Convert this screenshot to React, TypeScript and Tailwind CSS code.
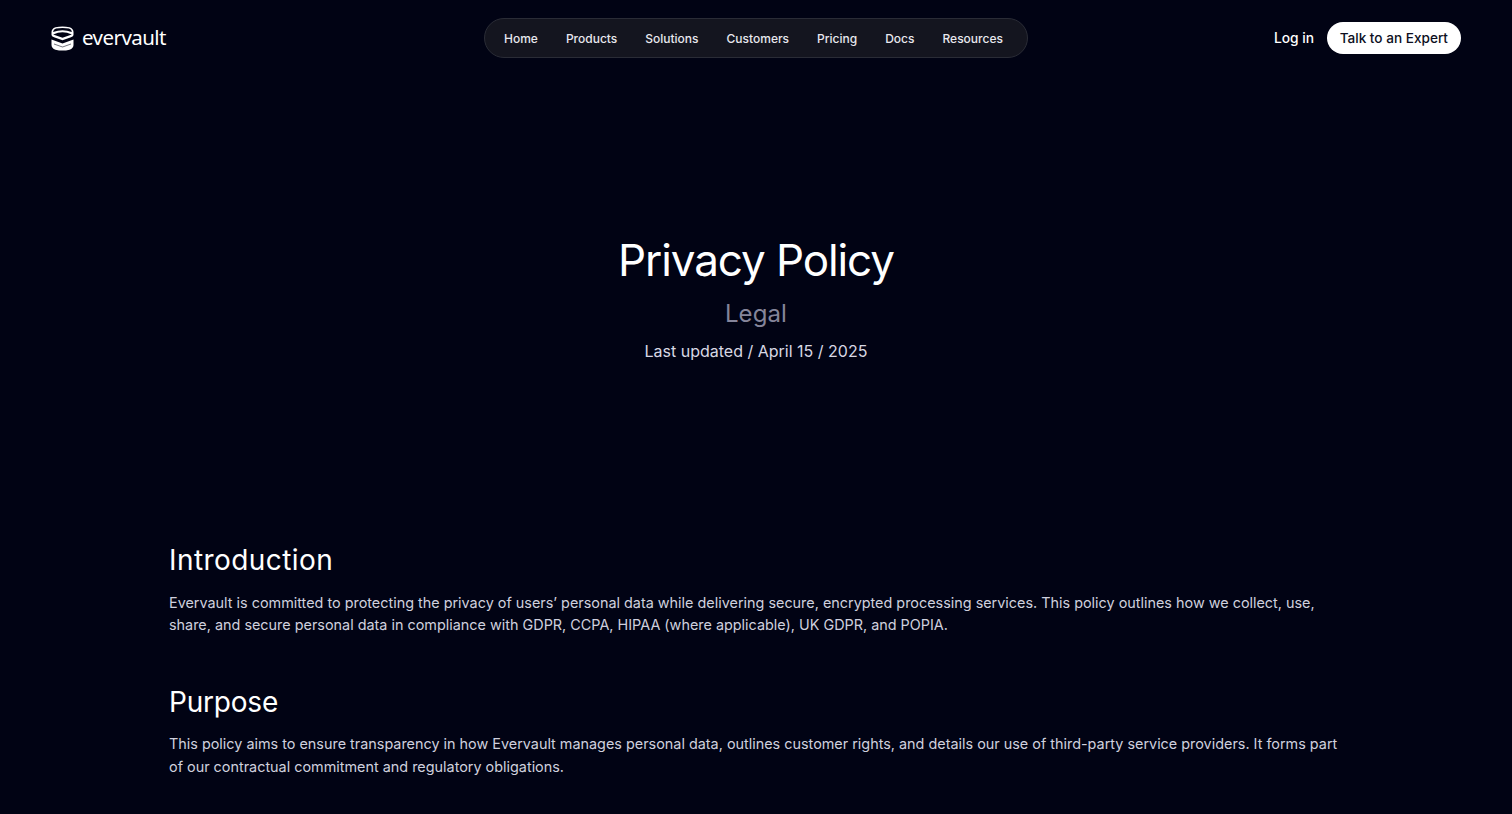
function Logo() {
  return (
    <svg width="23" height="25" viewBox="0 0 23 25" fill="none">
      <path d="M4.5 1.2 Q11.5 -0.4 18.5 1.2 Q22.5 2.6 22.5 6 L22.5 9 Q22.5 10.4 20 11.2 L11.5 14.2 L3 11.2 Q0.5 10.4 0.5 9 L0.5 6 Q0.5 2.6 4.5 1.2 Z" fill="#fff" />
      <path d="M5 2.6 Q11.5 1.2 18 2.6 Q20.6 3.6 21 6 Q16 4.2 11.5 4.2 Q7 4.2 2 6 Q2.4 3.6 5 2.6 Z" fill="#010314" />
      <path d="M2.2 8.6 Q7 6.2 11.5 6.2 Q16 6.2 20.8 8.6 L11.5 11.8 Z" fill="#010314" />
      <path d="M0.5 11.2 L11.5 15.2 L22.5 11.2 L22.5 13 L11.5 17 L0.5 13 Z" fill="#010314" />
      <path d="M0.5 13.4 L11.5 17.4 L22.5 13.4 L22.5 19 Q22.5 22.3 18.5 23.7 Q11.5 25.4 4.5 23.7 Q0.5 22.3 0.5 19 Z" fill="#fff" />
      <path d="M3 17.4 L11.5 20.4 L20 17.4 L20 18.4 L11.5 21.4 L3 18.4 Z" fill="#010314" fillOpacity="0.55" />
    </svg>
  );
}

export default function App() {
  const nav = ["Home", "Products", "Solutions", "Customers", "Pricing", "Docs", "Resources"];
  return (
    <div className="h-[814px] overflow-hidden bg-[#010314] font-['Inter',sans-serif]">
      <header className="relative flex h-[76px] items-center justify-between px-[51px]">
        <div className="flex items-center gap-[8px]">
          <Logo />
          <span className="-mt-[2px] font-['Noto_Sans',sans-serif] text-[20.5px] leading-none tracking-[-0.55px] text-white">evervault</span>
        </div>
        <nav className="absolute top-[18px] left-[484px] flex h-[40px] w-[544px] items-center gap-[28px] rounded-full border border-[#2a2c36] bg-[#14151f] pt-px pl-[19px]">
          {nav.map((n) => (
            <a key={n} className="text-[12px] font-medium text-[#e8e8ee]">{n}</a>
          ))}
        </nav>
        <div className="flex items-center gap-[12.5px]">
          <a className="text-[13.8px] font-medium text-white">Log in</a>
          <a className="flex h-[32px] items-center rounded-full bg-white px-[13px] text-[13.6px] font-medium text-[#0d0f1e]">Talk to an Expert</a>
        </div>
      </header>
      <section className="flex flex-col items-center pt-[156px]">
        <h1 className="text-[44px] leading-[56px] tracking-[-1.1px] text-white">Privacy Policy</h1>
        <p className="mt-[10px] text-[24px] leading-[32px] tracking-[0.1px] text-[#85859a]">Legal</p>
        <p className="mt-[9px] text-[16px] leading-[24px] text-[#d8d8e4]">Last updated / April 15 / 2025</p>
      </section>
      <main className="mt-[179px] ml-[169px] w-[1180px]">
        <h2 className="text-[28px] leading-[36px] tracking-[0.42px] text-white">Introduction</h2>
        <p className="mt-[14px] text-[14.4px] leading-[22.4px] text-[#cfd0de]">
          Evervault is committed to protecting the privacy of users’ personal data while delivering secure, encrypted processing services. This policy outlines how we collect, use, share, and secure personal data in compliance with GDPR, CCPA, HIPAA (where applicable), UK GDPR, and POPIA.
        </p>
        <h2 className="mt-[47px] text-[28px] leading-[36px] tracking-[-0.2px] text-white">Purpose</h2>
        <p className="mt-[13.5px] text-[14.4px] leading-[22.4px] text-[#cfd0de]">
          This policy aims to ensure transparency in how Evervault manages personal data, outlines customer rights, and details our use of third-party service providers. It forms part of our contractual commitment and regulatory obligations.
        </p>
      </main>
    </div>
  );
}
